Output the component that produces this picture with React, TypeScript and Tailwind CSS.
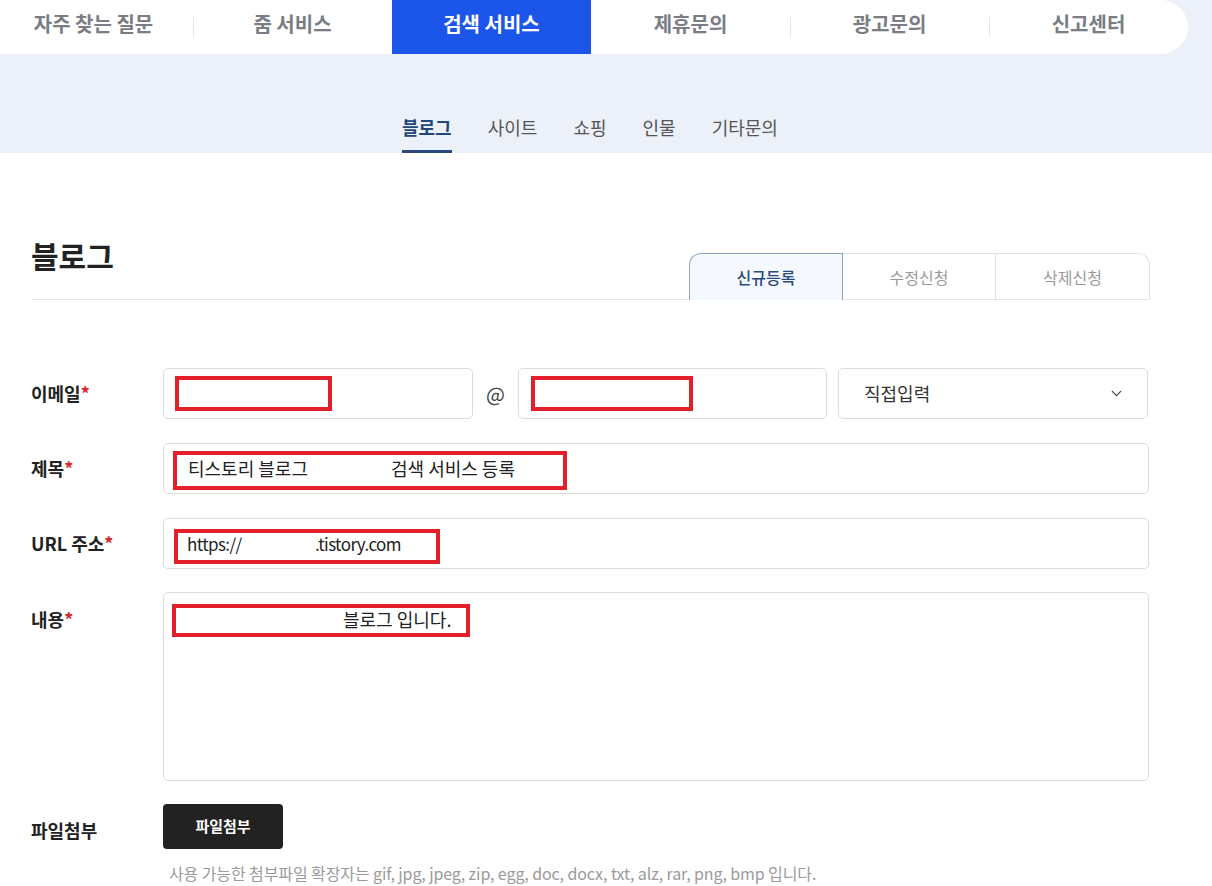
import { ChevronDown } from "lucide-react";

const topMenu = ["자주 찾는 질문", "줌 서비스", "검색 서비스", "제휴문의", "광고문의", "신고센터"];
const subMenu = ["블로그", "사이트", "쇼핑", "인물", "기타문의"];
const font = { fontFamily: '"Noto Sans CJK KR", "Noto Sans", sans-serif' };

// red annotation box drawn over the field
function Mark({ className }: { className: string }) {
  return <div className={`pointer-events-none absolute border-4 border-[#e3202a] ${className}`} />;
}

function Label({ text }: { text: string }) {
  return (
    <div className="w-[132px] shrink-0 text-[18px] font-bold text-[#222]">
      {text}
      <span className="text-[#d8262c]">*</span>
    </div>
  );
}

export default function App() {
  return (
    <div className="min-h-[886px] bg-white text-[#222]" style={font}>
      {/* ── Top band ── */}
      <div className="h-[153px] overflow-hidden bg-[#ebf0f9]">
        <nav className="-ml-[6px] flex h-[54px] w-[1194px] items-center rounded-r-full rounded-l-[27px] bg-white">
          {topMenu.map((m, i) => {
            const active = i === 2;
            const divider = i !== 0 && i !== 2 && i !== 3;
            return (
              <div key={m} className="relative flex h-full w-[199px] items-center justify-center">
                {divider && <span className="absolute left-0 top-[17px] h-[20px] w-px bg-[#e4e6ea]" />}
                <span
                  className={`flex h-full w-full items-center justify-center pb-[6px] text-[20px] font-bold ${
                    active ? "bg-[#1b55e9] text-white" : "text-[#7a7d83]"
                  }`}
                >
                  {m}
                </span>
              </div>
            );
          })}
        </nav>
        <div className="flex h-[99px] items-end gap-[36px] pl-[402px]">
          {subMenu.map((s, i) => (
            <div
              key={s}
              className={`flex h-[40px] items-center pb-[8px] text-[18px] ${
                i === 0 ? "border-b-[3px] border-[#2b4a7c] font-bold text-[#25467a]" : "border-b-[3px] border-transparent text-[#555]"
              }`}
            >
              {s}
            </div>
          ))}
        </div>
      </div>

      {/* ── Content ── */}
      <div className="ml-[31px] w-[1119px]">
        <div className="flex h-[147px] items-start justify-between border-b border-[#e6e6e6]">
          <h1 className="pt-[81px] text-[30px] font-bold leading-[42px] text-[#222]">블로그</h1>
          <div className="mt-[100px] flex">
            <div className="flex h-[47px] w-[154px] items-center justify-center rounded-tl-[12px] border border-b-0 border-[#8ea3c1] bg-[#f5f8fd] text-[16px] font-medium text-[#2b4a7c]">
              신규등록
            </div>
            <div className="flex h-[47px] w-[153px] items-center justify-center border-t border-r border-[#e2e2e2] text-[16px] text-[#999]">
              수정신청
            </div>
            <div className="flex h-[47px] w-[154px] items-center justify-center rounded-tr-[12px] border-t border-r border-[#e2e2e2] text-[16px] text-[#999]">
              삭제신청
            </div>
          </div>
        </div>

        <div className="mt-[68px] flex flex-col gap-[24px]">
          {/* email */}
          <div className="flex items-center">
            <Label text="이메일" />
            <div className="relative h-[51px] w-[310px] rounded-[5px] border border-[#dcdcdc]">
              <Mark className="left-[11px] top-[7px] h-[35px] w-[157px]" />
            </div>
            <div className="w-[45px] text-center text-[20px] text-[#444]">@</div>
            <div className="relative h-[51px] w-[309px] rounded-[5px] border border-[#dcdcdc]">
              <Mark className="left-[12px] top-[7px] h-[35px] w-[162px]" />
            </div>
            <div className="ml-[11px] flex h-[51px] w-[310px] items-center justify-between rounded-[5px] border border-[#dcdcdc] pl-[25px] pr-[22px] text-[18px] text-[#333]">
              직접입력
              <ChevronDown size={17} strokeWidth={1.6} className="text-[#333]" />
            </div>
          </div>

          {/* title */}
          <div className="flex items-center">
            <Label text="제목" />
            <div className="relative flex h-[51px] w-[986px] items-center rounded-[5px] border border-[#dcdcdc] pl-[24px] text-[18px] text-[#222]">
              <span className="w-[203px] shrink-0">티스토리 블로그</span>
              <span>검색 서비스 등록</span>
              <Mark className="left-[9px] top-[7px] h-[39px] w-[394px]" />
            </div>
          </div>

          {/* url */}
          <div className="flex items-center">
            <Label text="URL 주소" />
            <div className="relative flex h-[51px] w-[986px] items-center rounded-[5px] border border-[#dcdcdc] pl-[23px] text-[17px] tracking-[-0.6px] text-[#222]">
              <span className="w-[128px] shrink-0">https://</span>
              <span>.tistory.com</span>
              <Mark className="left-[10px] top-[10px] h-[35px] w-[266px]" />
            </div>
          </div>

          {/* content */}
          <div className="-mt-px flex items-start">
            <div className="pt-[14px]">
              <Label text="내용" />
            </div>
            <div className="relative h-[189px] w-[986px] rounded-[5px] border border-[#dcdcdc] pl-[179px] pt-[13px] text-[18px] text-[#222]">
              블로그 입니다.
              <Mark className="left-[8px] top-[11px] h-[33px] w-[298px]" />
            </div>
          </div>

          {/* file */}
          <div className="-mt-px">
            <div className="flex items-center">
              <div className="w-[132px] shrink-0 pt-[8px] text-[18px] font-bold text-[#222]">파일첨부</div>
              <button className="h-[45px] w-[120px] rounded-[4px] bg-[#222] text-[15px] font-bold text-white">파일첨부</button>
            </div>
            <p className="ml-[138px] mt-[12px] text-[16px] tracking-[-0.1px] text-[#9a9a9a]">
              사용 가능한 첨부파일 확장자는 gif, jpg, jpeg, zip, egg, doc, docx, txt, alz, rar, png, bmp 입니다.
            </p>
          </div>
        </div>
      </div>
    </div>
  );
}
